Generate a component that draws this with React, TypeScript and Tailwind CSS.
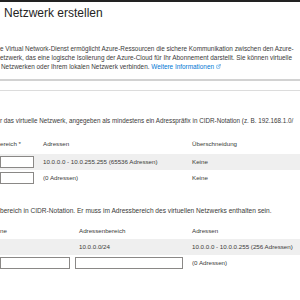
import { ExternalLink } from 'lucide-react';

const font = { fontFamily: '"Liberation Sans", Arial, sans-serif' };

function Input({ w }: { w: string }) {
  return <div className={`${w} h-[12px] border border-[#8a8886] bg-white`} />;
}

export default function App() {
  return (
    <div
      className="w-[300px] h-[300px] overflow-hidden bg-white text-[#3b3a39] border-t-2 border-[#222]"
      style={font}
    >
      <h1 className="pt-[3px] pl-[4px] text-[12px] leading-[16px] text-[#252423] whitespace-nowrap">
        Netzwerk erstellen
      </h1>

      <div className="mt-[23px] text-[6.4px] leading-[9px] whitespace-nowrap">
        <p>e Virtual Network-Dienst ermöglicht Azure-Ressourcen die sichere Kommunikation zwischen den Azure-</p>
        <p>etzwerk, das eine logische Isolierung der Azure-Cloud für Ihr Abonnement darstellt. Sie können virtuelle</p>
        <p className="pl-[1px] flex items-center">
          Netzwerken oder Ihrem lokalen Netzwerk verbinden.&nbsp;
          <span className="text-[#0078d4]">Weitere Informationen</span>
          <ExternalLink className="ml-[2px] w-[5px] h-[5px] text-[#0078d4]" strokeWidth={2} />
        </p>
      </div>

      <div className="mt-[8px] h-[2px] bg-[#d2d2d2]" />
      <div className="mt-[9px] h-px bg-[#dcdcdc]" />

      <p className="mt-[25px] text-[6.3px] leading-[9px] whitespace-nowrap">
        r das virtuelle Netzwerk, angegeben als mindestens ein Adresspräfix in CIDR-Notation (z. B. 192.168.1.0/
      </p>

      <div className="mt-[13px] text-[6.2px] whitespace-nowrap">
        <div className="grid grid-cols-[43px_149px_1fr] items-center h-[12px]">
          <span>ereich *</span>
          <span>Adressen</span>
          <span>Überschneidung</span>
        </div>
        <div className="mt-[4px] grid grid-cols-[43px_149px_1fr] items-center h-[16px] bg-[#efefef]">
          <Input w="w-[34px]" />
          <span>10.0.0.0 - 10.0.255.255 (65536 Adressen)</span>
          <span>Keine</span>
        </div>
        <div className="grid grid-cols-[43px_149px_1fr] items-center h-[16px]">
          <Input w="w-[34px]" />
          <span>(0 Adressen)</span>
          <span>Keine</span>
        </div>
      </div>

      <p className="mt-[20px] text-[6.6px] leading-[9px] whitespace-nowrap">
        bereich in CIDR-Notation. Er muss im Adressbereich des virtuellen Netzwerks enthalten sein.
      </p>

      <div className="mt-[10px] text-[6.2px] whitespace-nowrap">
        <div className="grid grid-cols-[79px_113px_1fr] items-center h-[12px]">
          <span>ne</span>
          <span>Adressenbereich</span>
          <span>Adressen</span>
        </div>
        <div className="mt-[2px] grid grid-cols-[79px_113px_1fr] items-center h-[16px] bg-[#efefef]">
          <span />
          <span>10.0.0.0/24</span>
          <span>10.0.0.0 - 10.0.0.255 (256 Adressen)</span>
        </div>
        <div className="grid grid-cols-[75px_117px_1fr] items-center h-[16px]">
          <Input w="w-[70px]" />
          <Input w="w-[108px]" />
          <span>(0 Adressen)</span>
        </div>
      </div>
    </div>
  );
}
